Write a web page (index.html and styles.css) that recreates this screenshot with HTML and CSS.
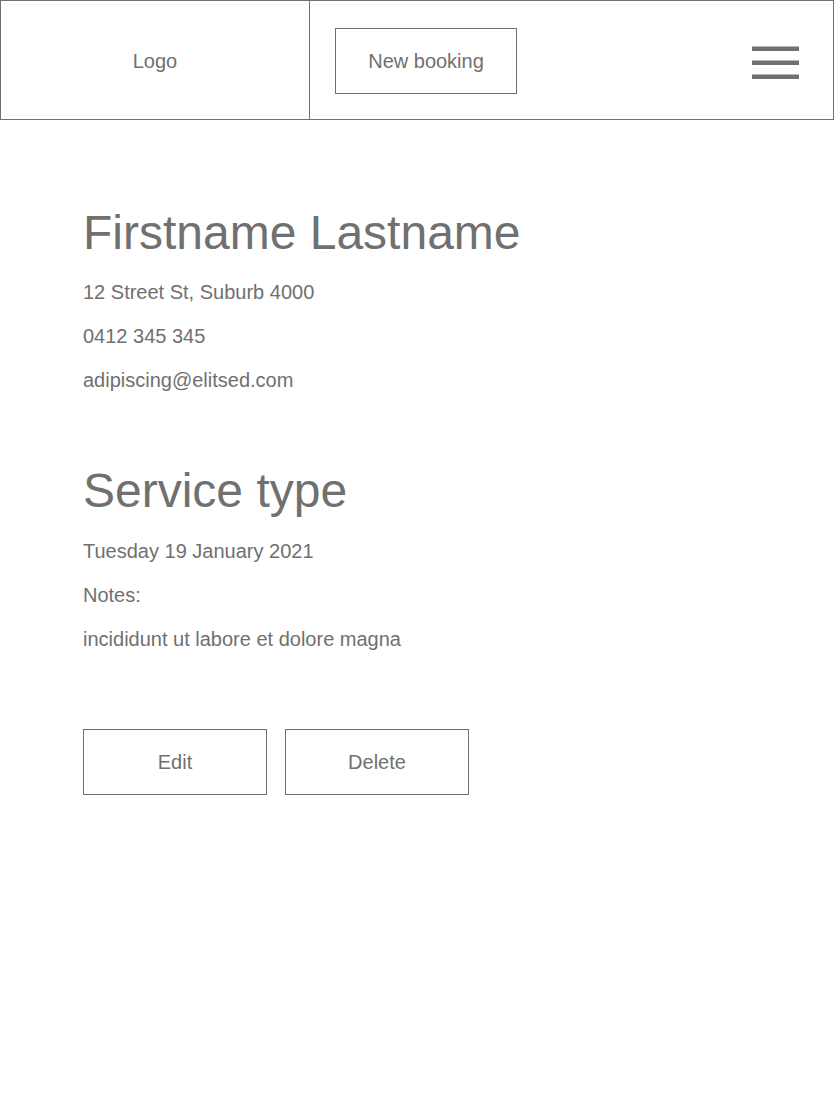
FILE: index.html
```html
<!DOCTYPE html>
<html lang="en">
<head>
<meta charset="utf-8">
<title>Booking</title>
<link rel="stylesheet" href="styles.css">
</head>
<body>
<header class="topbar">
  <div class="logo-cell">Logo</div>
  <div class="nav-cell">
    <button class="btn btn-new">New booking</button>
    <svg class="menu" width="47" height="33" viewBox="0 0 47 33" aria-label="Menu">
      <rect x="0" y="0.5" width="47" height="4.5" fill="#707070"/>
      <rect x="0" y="14.5" width="47" height="4.5" fill="#707070"/>
      <rect x="0" y="28.5" width="47" height="4.5" fill="#707070"/>
    </svg>
  </div>
</header>
<main class="content">
  <section class="customer">
    <h1 class="title">Firstname Lastname</h1>
    <p class="line line-first">12 Street St, Suburb 4000</p>
    <p class="line">0412 345 345</p>
    <p class="line">adipiscing@elitsed.com</p>
  </section>
  <section class="service">
    <h2 class="title">Service type</h2>
    <p class="line">Tuesday 19 January 2021</p>
    <p class="line">Notes:</p>
    <p class="line">incididunt ut labore et dolore magna</p>
  </section>
  <div class="actions">
    <button class="btn btn-action">Edit</button>
    <button class="btn btn-action">Delete</button>
  </div>
</main>
</body>
</html>
```
FILE: styles.css
```css
* { box-sizing: border-box; }
html, body { margin: 0; padding: 0; background: #fff; }
body {
  font-family: "Liberation Sans", Arial, sans-serif;
  color: #707070;
  font-size: 20px;
}
.topbar {
  display: flex;
  height: 120px;
  border: 1px solid #707070;
}
.logo-cell {
  width: 309px;
  border-right: 1px solid #707070;
  display: flex;
  align-items: center;
  justify-content: center;
  padding-top: 2px;
  line-height: 24px;
}
.nav-cell {
  flex: 1;
  display: flex;
  align-items: center;
  justify-content: space-between;
  padding: 0 34px 0 25px;
}
.btn {
  font-family: inherit;
  font-size: 20px;
  color: #707070;
  background: #fff;
  border: 1px solid #707070;
  height: 66px;
  padding: 0;
  cursor: pointer;
}
.btn-new { width: 182px; margin-top: 1px; padding-top: 2px; }
.menu { display: block; margin-top: 5px; }
.content { padding: 85px 0 0 83px; }
.title {
  margin: 0;
  font-size: 48px;
  font-weight: normal;
  line-height: 56px;
}
.line {
  margin: 20px 0 0;
  line-height: 24px;
}
.line-first { margin-top: 19px; }
.service { margin-top: 71px; }
.actions {
  display: flex;
  gap: 18px;
  margin-top: 78px;
}
.btn-action { width: 184px; }
```
